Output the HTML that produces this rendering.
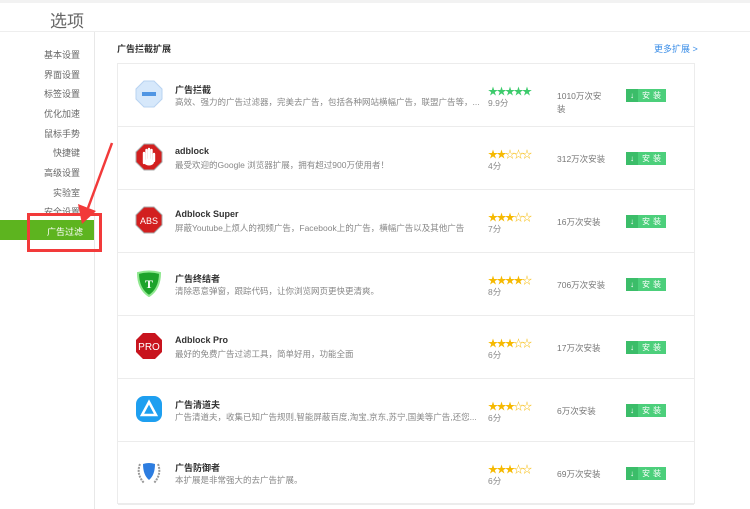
<!DOCTYPE html>
<html><head><meta charset="utf-8"><style>
*{margin:0;padding:0;box-sizing:border-box}
body{width:750px;height:509px;background:#fff;font-family:"Liberation Sans","Noto Sans CJK SC",sans-serif;position:relative;overflow:hidden;color:#333}
.top{position:absolute;left:0;top:0;width:750px;height:3px;background:#f2f2f2}
.hdr{position:absolute;left:0;top:31px;width:750px;height:1px;background:#eee}
.title{position:absolute;left:50px;top:7px;font-size:17px;color:#666}
.side{position:absolute;left:94px;top:32px;width:1px;height:477px;background:#e8e8e8}
.menu div{position:absolute;right:670px;font-size:9px;color:#666;white-space:nowrap}
.act{position:absolute;left:0;top:220px;width:94px;height:20px;background:#5db41f}
.act span{position:absolute;left:47px;top:5px;font-size:9px;color:#fff}
.rbox{position:absolute;left:27px;top:213px;width:75px;height:39px;border:3px solid #f23a3a}
.sec{position:absolute;left:117px;top:42px;font-size:9px;font-weight:bold;color:#333}
.more{position:absolute;left:654px;top:42px;font-size:9px;color:#3b8ee8}
.card{position:absolute;left:117px;top:63px;width:578px;height:441px;border:1px solid #ececec}
.row{position:absolute;left:0;width:576px;height:63px;border-bottom:1px solid #ececec}
.ic{position:absolute;left:17px;top:16px;width:28px;height:28px}
.nm{position:absolute;left:57px;top:19px;font-size:9px;font-weight:bold;color:#333}
.ds{position:absolute;left:57px;top:32px;font-size:8.5px;color:#888;white-space:nowrap}
.st{position:absolute;left:370px;top:19px;font-size:10px;letter-spacing:-1.5px;color:#f6b900}
.st.g{color:#3dcb6c}
.sc{position:absolute;left:370px;top:33px;font-size:8.5px;color:#888}
.in{position:absolute;left:439px;top:26px;font-size:8.5px;color:#777;white-space:nowrap;line-height:13px}
.bt{position:absolute;left:508px;top:25px;width:40px;height:13px;background:#4ccf7b;color:#fff;font-size:8px;line-height:13px}
.bt i{position:absolute;left:0;top:0;width:12px;height:13px;background:#3bbd69;font-style:normal;text-align:center;font-weight:bold}
.bt span{position:absolute;left:16px;letter-spacing:3px}
</style></head><body>
<div class="top"></div>
<div class="title">选项</div>
<div class="hdr"></div>
<div class="side"></div>
<div class="menu">
<div style="top:48px">基本设置</div><div style="top:68px">界面设置</div><div style="top:87px">标签设置</div><div style="top:107px">优化加速</div><div style="top:127px">鼠标手势</div><div style="top:146px">快捷键</div><div style="top:166px">高级设置</div><div style="top:186px">实验室</div><div style="top:205px">安全设置</div>
</div>
<div class="act"><span>广告过滤</span></div>
<div class="rbox"></div>
<svg style="position:absolute;left:0;top:0" width="130" height="260"><line x1="112" y1="143" x2="88" y2="208" stroke="#f23a3a" stroke-width="2.5"/><polygon points="82,224 78,204 96,211" fill="#f23a3a"/></svg>
<div class="sec">广告拦截扩展</div>
<div class="more">更多扩展 &gt;</div>
<div class="card">
<div class="row" style="top:0">
<svg class="ic" viewBox="0 0 28 28"><polygon points="9,1 19,1 27,9 27,19 19,27 9,27 1,19 1,9" fill="#d6e8fb" stroke="#b8d3f2"/><rect x="7" y="12" width="14" height="4" fill="#4f95e3"/></svg>
<div class="nm">广告拦截</div><div class="ds">高效、强力的广告过滤器，完美去广告，包括各种网站横幅广告，联盟广告等，...</div>
<div class="st g">★★★★★</div><div class="sc">9.9分</div><div class="in">1010万次安<br>装</div><div class="bt"><i>↓</i><span>安装</span></div></div>
<div class="row" style="top:63px">
<svg class="ic" viewBox="0 0 28 28"><polygon points="9,1 19,1 27,9 27,19 19,27 9,27 1,19 1,9" fill="#d21f1f" stroke="#aaa"/><path d="M9 20 V10 M11.5 17 V7 M14 17 V6 M16.5 17 V7 M19 18 V11" stroke="#fff" stroke-width="2.4" stroke-linecap="round"/><ellipse cx="14" cy="19" rx="5" ry="3.5" fill="#fff"/></svg>
<div class="nm">adblock</div><div class="ds">最受欢迎的Google 浏览器扩展，拥有超过900万使用者！</div>
<div class="st">★★☆☆☆</div><div class="sc">4分</div><div class="in">312万次安装</div><div class="bt"><i>↓</i><span>安装</span></div></div>
<div class="row" style="top:126px">
<svg class="ic" viewBox="0 0 28 28"><polygon points="9,1 19,1 27,9 27,19 19,27 9,27 1,19 1,9" fill="#d21f1f" stroke="#aaa"/><text x="14" y="18" font-size="9" fill="#fff" text-anchor="middle" font-family="Liberation Sans">ABS</text></svg>
<div class="nm">Adblock Super</div><div class="ds">屏蔽Youtube上烦人的视频广告，Facebook上的广告，横幅广告以及其他广告</div>
<div class="st">★★★☆☆</div><div class="sc">7分</div><div class="in">16万次安装</div><div class="bt"><i>↓</i><span>安装</span></div></div>
<div class="row" style="top:189px">
<svg class="ic" viewBox="0 0 28 28"><path d="M3 4 Q14 1 25 4 Q25 20 14 27 Q3 20 3 4Z" fill="#1da32a" stroke="#8fe88f" stroke-width="2"/><text x="14" y="19" font-size="12" font-weight="bold" fill="#fff" text-anchor="middle" font-family="Liberation Serif">T</text></svg>
<div class="nm">广告终结者</div><div class="ds">清除恶意弹窗，跟踪代码，让你浏览网页更快更清爽。</div>
<div class="st">★★★★☆</div><div class="sc">8分</div><div class="in">706万次安装</div><div class="bt"><i>↓</i><span>安装</span></div></div>
<div class="row" style="top:252px">
<svg class="ic" viewBox="0 0 28 28"><polygon points="8,1 20,1 27,8 27,20 20,27 8,27 1,20 1,8" fill="#c8141e"/><text x="14" y="18" font-size="10" fill="#fff" text-anchor="middle" font-family="Liberation Sans">PRO</text></svg>
<div class="nm">Adblock Pro</div><div class="ds">最好的免费广告过滤工具，简单好用，功能全面</div>
<div class="st">★★★☆☆</div><div class="sc">6分</div><div class="in">17万次安装</div><div class="bt"><i>↓</i><span>安装</span></div></div>
<div class="row" style="top:315px">
<svg class="ic" viewBox="0 0 28 28"><rect x="1" y="1" width="26" height="26" rx="8" fill="#1e9ff0"/><path d="M14 7 L21 20 H7 Z" fill="none" stroke="#fff" stroke-width="2.5"/></svg>
<div class="nm">广告清道夫</div><div class="ds">广告清道夫，收集已知广告规则,智能屏蔽百度,淘宝,京东,苏宁,国美等广告,还您...</div>
<div class="st">★★★☆☆</div><div class="sc">6分</div><div class="in">6万次安装</div><div class="bt"><i>↓</i><span>安装</span></div></div>
<div class="row" style="top:378px">
<svg class="ic" viewBox="0 0 28 28"><path d="M5 6 Q1 16 9 25 M23 6 Q27 16 19 25" fill="none" stroke="#999" stroke-width="2" stroke-dasharray="2 1"/><path d="M8 6 Q14 4 20 6 Q20 17 14 22 Q8 17 8 6Z" fill="#2d7de0"/></svg>
<div class="nm">广告防御者</div><div class="ds">本扩展是非常强大的去广告扩展。</div>
<div class="st">★★★☆☆</div><div class="sc">6分</div><div class="in">69万次安装</div><div class="bt"><i>↓</i><span>安装</span></div></div>
</div>
</body></html>
